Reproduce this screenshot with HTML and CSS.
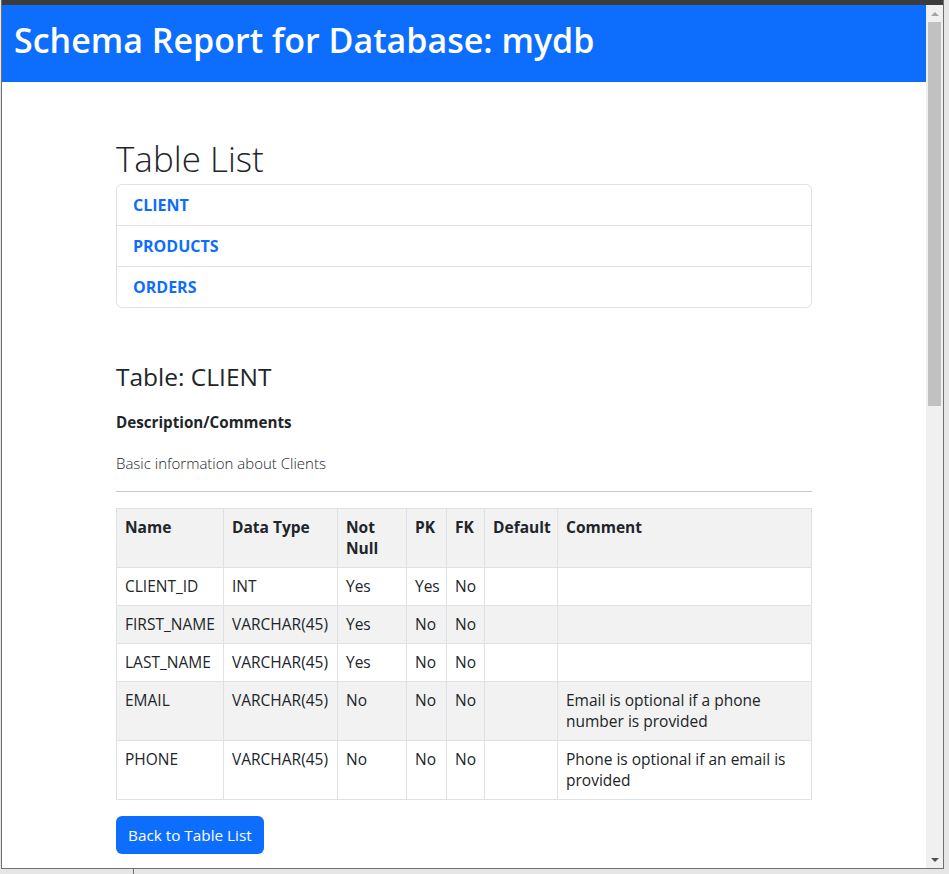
FILE: index.html
```html
<!DOCTYPE html>
<html lang="en">
<head>
<meta charset="utf-8">
<title>Schema Report for Database: mydb</title>
<link rel="stylesheet" href="styles.css">
</head>
<body>
<div class="window">
  <div class="titlebar"></div>
  <div class="frame">
    <div class="viewport">
      <header class="banner">
        <h1 class="banner-title">Schema Report for Database: mydb</h1>
      </header>
      <main class="container">
        <h2 class="list-title">Table List</h2>
        <ul class="list-group">
          <li class="list-item"><a href="#client">CLIENT</a></li>
          <li class="list-item"><a href="#products">PRODUCTS</a></li>
          <li class="list-item"><a href="#orders">ORDERS</a></li>
        </ul>

        <section class="table-section" id="client">
          <h3 class="table-title">Table: CLIENT</h3>
          <p class="desc-label">Description/Comments</p>
          <p class="desc-text">Basic information about Clients</p>
          <hr class="divider">
          <table class="schema">
            <colgroup>
              <col class="c-name">
              <col class="c-type">
              <col class="c-null">
              <col class="c-pk">
              <col class="c-fk">
              <col class="c-def">
              <col class="c-comment">
            </colgroup>
            <tr class="head">
              <th>Name</th>
              <th>Data Type</th>
              <th>Not Null</th>
              <th>PK</th>
              <th>FK</th>
              <th>Default</th>
              <th>Comment</th>
            </tr>
            <tr>
              <td>CLIENT_ID</td><td>INT</td><td>Yes</td><td>Yes</td><td>No</td><td></td><td></td>
            </tr>
            <tr class="striped">
              <td>FIRST_NAME</td><td>VARCHAR(45)</td><td>Yes</td><td>No</td><td>No</td><td></td><td></td>
            </tr>
            <tr>
              <td>LAST_NAME</td><td>VARCHAR(45)</td><td>Yes</td><td>No</td><td>No</td><td></td><td></td>
            </tr>
            <tr class="striped">
              <td>EMAIL</td><td>VARCHAR(45)</td><td>No</td><td>No</td><td>No</td><td></td><td>Email is optional if a phone number is provided</td>
            </tr>
            <tr>
              <td>PHONE</td><td>VARCHAR(45)</td><td>No</td><td>No</td><td>No</td><td></td><td>Phone is optional if an email is provided</td>
            </tr>
          </table>
          <a class="btn" href="#top">Back to Table List</a>
        </section>
      </main>
    </div>
    <div class="scrollbar">
      <div class="sb-btn"><span class="arrow-up"></span></div>
      <div class="thumb"></div>
      <div class="sb-track"></div>
      <div class="sb-btn"><span class="arrow-down"></span></div>
    </div>
  </div>
</div>
<div class="desk"><div class="desk-line"></div></div>
</body>
</html>
```

FILE: styles.css
```css
* {
  box-sizing: border-box;
}

html,
body {
  margin: 0;
  padding: 0;
}

body {
  background: #e6e6e6;
  font-family: "Open Sans", "Noto Sans", sans-serif;
  color: #212529;
  overflow: hidden;
  height: 874px;
}

.window {
  margin-left: 1px;
  width: 943px;
  height: 869px;
  display: flex;
  flex-direction: column;
  border: 1px solid #707070;
  border-top: 0;
  background: #fff;
}

.titlebar {
  flex: none;
  height: 5px;
  background: #3c3c3c;
}

.frame {
  flex: 1;
  display: flex;
  min-height: 0;
}

.viewport {
  flex: 1;
  overflow: hidden;
  background: #fff;
}

.scrollbar {
  flex: none;
  width: 17px;
  background: #f0f0f0;
  display: flex;
  flex-direction: column;
  align-items: center;
}

.sb-btn {
  flex: none;
  height: 17px;
  width: 17px;
  display: flex;
  align-items: center;
  justify-content: center;
}

.arrow-up {
  width: 0;
  height: 0;
  border-left: 4px solid transparent;
  border-right: 4px solid transparent;
  border-bottom: 4px solid #a3a3a3;
}

.arrow-down {
  width: 0;
  height: 0;
  border-left: 4px solid transparent;
  border-right: 4px solid transparent;
  border-top: 4px solid #505050;
}

.thumb {
  flex: none;
  width: 13px;
  height: 384px;
  background: #c1c1c1;
}

.sb-track {
  flex: 1;
}

.desk {
  height: 5px;
  padding-left: 133px;
}

.desk-line {
  width: 1px;
  height: 5px;
  background: #707070;
}

/* page */

.banner {
  background: #0d6efd;
  color: #fff;
  height: 77px;
  padding: 14px 12px 0;
}

.banner-title {
  margin: 0;
  font-size: 34px;
  font-weight: 600;
  line-height: 42px;
}

.container {
  width: 720px;
  margin: 0 auto;
  padding: 0 12px;
}

.list-title {
  margin: 56px 0 4px;
  font-size: 35px;
  font-weight: 300;
  line-height: 42px;
}

.list-group {
  list-style: none;
  margin: 0;
  padding: 0;
  border: 1px solid #dee2e6;
  border-radius: 6px;
}

.list-item {
  padding: 8px 16px;
  font-size: 16px;
  line-height: 24px;
  border-top: 1px solid #dee2e6;
}

.list-item:first-child {
  border-top: 0;
}

.list-item a {
  color: #0d6efd;
  font-weight: 700;
  text-decoration: none;
}

.table-section {
  padding-top: 54px;
}

.table-title {
  margin: 0;
  font-size: 24.5px;
  font-weight: 400;
  line-height: 29.4px;
}

.desc-label {
  margin: 19px 0 17px;
  font-size: 15.2px;
  line-height: 24px;
  font-weight: 700;
}

.desc-text {
  margin: 0;
  font-size: 15px;
  line-height: 24px;
  font-weight: 300;
}

.divider {
  margin: 16px 0;
  border: 0;
  border-top: 1px solid #c8c9ca;
}

.schema {
  width: 695px;
  table-layout: fixed;
  border-collapse: collapse;
  font-size: 15.5px;
  line-height: 21px;
  margin-bottom: 16px;
}

.c-name { width: 107px; }
.c-type { width: 114px; }
.c-null { width: 69px; }
.c-pk { width: 40px; }
.c-fk { width: 38px; }
.c-def { width: 73px; }
.c-comment { width: 254px; }

.schema th,
.schema td {
  border: 1px solid #dee2e6;
  padding: 8px;
  text-align: left;
  vertical-align: top;
}

.schema th {
  font-weight: 700;
}

.schema .head,
.schema .striped {
  background: #f2f2f2;
}

.btn {
  display: inline-block;
  background: #0d6efd;
  color: #fff;
  text-decoration: none;
  font-size: 15.3px;
  line-height: 24px;
  padding: 7px 12px;
  border-radius: 6px;
}
```
